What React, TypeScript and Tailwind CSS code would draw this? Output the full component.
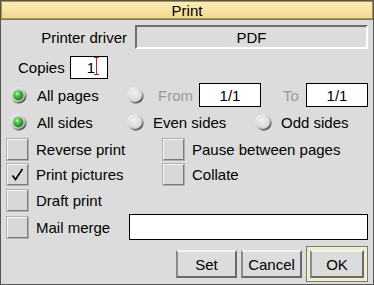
import React from "react";

// RISC OS style "Print" dialogue box

const font = "font-['Liberation_Sans',Arial,sans-serif]";

function Radio({ on }: { on?: boolean }) {
    return (
        <svg width="17" height="17" viewBox="0 0 17 17" aria-hidden className="shrink-0">
            <defs>
                <linearGradient id="rRim" x1="0.15" y1="0.1" x2="0.85" y2="0.95">
                    <stop offset="0%" stopColor="#fafafa" />
                    <stop offset="50%" stopColor="#c8c8c8" />
                    <stop offset="100%" stopColor="#3a3a3a" />
                </linearGradient>
                <radialGradient id="rFace" cx="42%" cy="38%" r="70%">
                    <stop offset="0%" stopColor="#f2f2f2" />
                    <stop offset="100%" stopColor="#d2d2d2" />
                </radialGradient>
                <radialGradient id="rGreen" cx="38%" cy="32%" r="70%">
                    <stop offset="0%" stopColor="#c6f7b0" />
                    <stop offset="40%" stopColor="#45c53c" />
                    <stop offset="100%" stopColor="#1c7e1f" />
                </radialGradient>
            </defs>
            <circle cx="8.5" cy="8.5" r="8.2" fill="url(#rRim)" />
            <circle cx="8.3" cy="8.2" r="6.6" fill={on ? "#c9c9c9" : "url(#rFace)"} />
            {on && <circle cx="8.4" cy="8.4" r="5" fill="url(#rGreen)" />}
        </svg>
    );
}

function Check({ on }: { on?: boolean }) {
    return (
        <span className="w-[21px] h-[21px] shrink-0 bg-[#d8d8d8] border border-t-[#f6f6f6] border-l-[#f6f6f6] border-r-[#7a7a7a] border-b-[#7a7a7a] shadow-[0_0_0_1px_#b0b0b0] flex items-center justify-center">
            {on && (
                <svg width="15" height="15" viewBox="0 0 15 15" aria-hidden>
                    <path d="M2.5 8.5 L5.5 12.5 L12.5 2" fill="none" stroke="#000" strokeWidth="1.6" />
                </svg>
            )}
        </span>
    );
}

function Field({ w, children }: { w: string; children?: React.ReactNode }) {
    return (
        <span className={`${w} h-full bg-white border border-black flex items-center justify-center`}>
            {children}
        </span>
    );
}

function Btn({ label }: { label: string }) {
    return (
        <span className="w-[61px] h-[28px] bg-[#dcdcdc] border-2 border-t-[#f2f2f2] border-l-[#8a8a8a] border-r-[#6a6a6a] border-b-[#6a6a6a] flex items-center justify-center">
            {label}
        </span>
    );
}

export default function App() {
    return (
        <div className={`${font} w-[374px] h-[285px] bg-[#dcdcdc] border border-[#555] text-[15px] leading-none text-black flex flex-col overflow-hidden`}>
            {/* title bar */}
            <div className="h-[19px] shrink-0 bg-gradient-to-b from-[#fdeebb] to-[#f4d88c] border-b border-[#8a7845] shadow-[inset_0_0_0_1px_#a89458] flex items-center justify-center">
                Print
            </div>

            {/* printer driver */}
            <div className="mt-[5px] h-[24px] flex items-center">
                <span className="w-[126px] text-right">Printer driver</span>
                <span className="ml-[8px] w-[233px] h-full bg-[#dcdcdc] border-2 border-t-[#6e6e6e] border-l-[#6e6e6e] border-r-white border-b-white flex items-center justify-center">
                    PDF
                </span>
            </div>

            {/* copies */}
            <div className="mt-[7px] h-[23px] flex items-center">
                <span className="ml-[17px] w-[52px]">Copies</span>
                <Field w="w-[38px]">
                    <span className="relative pl-[4px]">
                        1
                        <span className="absolute -right-[4px] -top-[3px] w-[5px] h-[18px] border-x-0 border-y border-[#d21a1a] flex justify-center">
                            <span className="w-px h-full bg-[#d21a1a]" />
                        </span>
                    </span>
                </Field>
            </div>

            {/* page range */}
            <div className="mt-[4px] h-[24px] flex items-center pl-[9px]">
                <Radio on />
                <span className="ml-[10px] w-[90px]">All pages</span>
                <Radio />
                <span className="ml-[14px] w-[41px] text-[#9a9a9a]">From</span>
                <Field w="w-[62px]">1/1</Field>
                <span className="ml-[22px] w-[23px] text-[#9a9a9a]">To</span>
                <Field w="w-[62px]">1/1</Field>
            </div>

            {/* sides */}
            <div className="mt-[3px] h-[24px] flex items-center pl-[9px]">
                <Radio on />
                <span className="ml-[10px] w-[90px]">All sides</span>
                <Radio />
                <span className="ml-[9px] w-[102px]">Even sides</span>
                <Radio />
                <span className="ml-[9px]">Odd sides</span>
            </div>

            {/* options */}
            <div className="mt-[4px] h-[22px] flex items-center pl-[6px]">
                <Check />
                <span className="ml-[8px] w-[127px]">Reverse print</span>
                <Check />
                <span className="ml-[8px]">Pause between pages</span>
            </div>
            <div className="mt-[3px] h-[22px] flex items-center pl-[6px]">
                <Check on />
                <span className="ml-[8px] w-[127px]">Print pictures</span>
                <Check />
                <span className="ml-[8px]">Collate</span>
            </div>
            <div className="mt-[4px] h-[22px] flex items-center pl-[6px]">
                <Check />
                <span className="ml-[8px]">Draft print</span>
            </div>
            <div className="mt-[3px] h-[26px] flex items-center pl-[6px]">
                <Check />
                <span className="ml-[8px] w-[93px]">Mail merge</span>
                <Field w="w-[239px]" />
            </div>

            {/* action buttons */}
            <div className="mt-[6px] h-[36px] flex items-center justify-end gap-[4px] pr-[5px]">
                <Btn label="Set" />
                <Btn label="Cancel" />
                <span className="w-[62px] h-[36px] bg-[#f0eecb] border border-[#7a7a7a] flex items-center justify-center">
                    <span className="w-[54px] h-[28px] bg-[#dcdcdc] border-2 border-t-[#f2f2f2] border-l-[#8a8a8a] border-r-[#6a6a6a] border-b-[#6a6a6a] flex items-center justify-center">
                        OK
                    </span>
                </span>
            </div>
        </div>
    );
}
